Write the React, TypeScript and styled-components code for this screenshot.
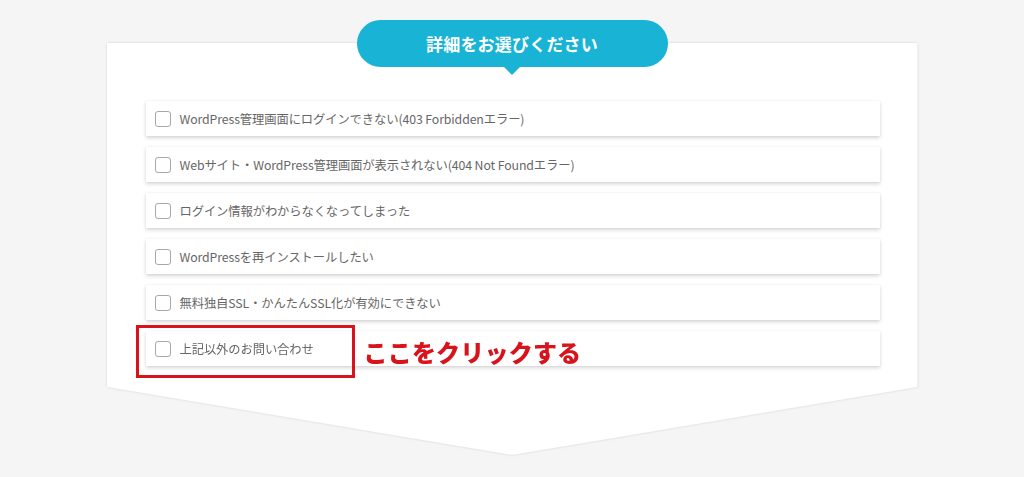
import styled, { createGlobalStyle } from "styled-components";

const GlobalStyle = createGlobalStyle`
  html, body {
    margin: 0;
    padding: 0;
    background: #f5f5f5;
    font-family: "Noto Sans CJK JP", "Noto Sans", sans-serif;
  }
`;

const items = [
  "WordPress管理画面にログインできない(403 Forbiddenエラー)",
  "Webサイト・WordPress管理画面が表示されない(404 Not Foundエラー)",
  "ログイン情報がわからなくなってしまった",
  "WordPressを再インストールしたい",
  "無料独自SSL・かんたんSSL化が有効にできない",
  "上記以外のお問い合わせ",
];

function App() {
  return (
    <Page>
      <GlobalStyle />
      <Section>
        <PanelFrame>
          <Panel>
            <List>
              {items.map((label, i) => (
                <Row key={label}>
                  <Box />
                  <Label>{label}</Label>
                  {i === items.length - 1 && (
                    <>
                      <Highlight />
                      <Note>ここをクリックする</Note>
                    </>
                  )}
                </Row>
              ))}
            </List>
          </Panel>
        </PanelFrame>
        <Bubble>詳細をお選びください</Bubble>
      </Section>
    </Page>
  );
}

const Page = styled.div`
  width: 1024px;
  height: 477px;
  display: flex;
  justify-content: center;
  overflow: hidden;
`;

const Section = styled.div`
  position: relative;
  width: 811px;
  margin-top: 43px;
`;

const PanelFrame = styled.div`
  filter: drop-shadow(0 0 1px #cfcfcf);
`;

const Panel = styled.div`
  height: 412px;
  background: #fff;
  padding: 58px 38px 0 39px;
  box-sizing: border-box;
  clip-path: polygon(0 0, 100% 0, 100% 344px, 50% 100%, 0 344px);
`;

const Bubble = styled.div`
  position: absolute;
  top: -23px;
  left: 250px;
  width: 311px;
  height: 47px;
  border-radius: 24px;
  background: #18b3d5;
  color: #fff;
  font-size: 17px;
  font-weight: 700;
  display: flex;
  align-items: center;
  justify-content: center;
  letter-spacing: 0.2px;

  &::after {
    content: "";
    position: absolute;
    left: 50%;
    bottom: -8px;
    margin-left: -9px;
    border-left: 9px solid transparent;
    border-right: 9px solid transparent;
    border-top: 9px solid #18b3d5;
  }
`;

const List = styled.div`
  display: flex;
  flex-direction: column;
  gap: 11px;
`;

const Row = styled.div`
  position: relative;
  height: 35px;
  background: #fff;
  display: flex;
  align-items: center;
  gap: 9px;
  padding-left: 9px;
  box-shadow: 0 2px 4px rgba(0, 0, 0, 0.16), 0 0 2px rgba(0, 0, 0, 0.06);
`;

const Box = styled.span`
  width: 14px;
  height: 14px;
  border: 1.5px solid #a8a8a8;
  border-radius: 3px;
  background: #fff;
`;

const Label = styled.span`
  font-size: 12.3px;
  color: #666;
  letter-spacing: -0.1px;
`;

const Highlight = styled.div`
  position: absolute;
  left: -10px;
  top: -6px;
  width: 219px;
  height: 53px;
  border: 3px solid #d9131b;
  box-sizing: border-box;
`;

const Note = styled.div`
  position: absolute;
  left: 218px;
  top: 50%;
  transform: translateY(-44%);
  font-size: 24px;
  font-weight: 900;
  color: #d9131b;
  letter-spacing: 0.2px;
  white-space: nowrap;
`;

export default App;
